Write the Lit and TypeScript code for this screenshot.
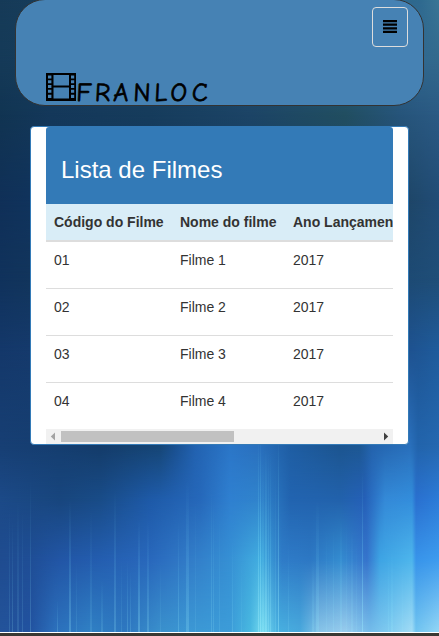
import { LitElement, html, css, svg } from "lit";
import { customElement, property } from "lit/decorators.js";

type Row = { y: number; stops: [number, string][] };

// Colours of the backdrop at given heights; the heights between are blended.
const rows: Row[] = [
  { y: 0, stops: [[0, "#163b58"], [200, "#1c4868"], [420, "#2f6a90"], [439, "#3a7696"]] },
  { y: 60, stops: [[0, "#153a58"], [200, "#1c4564"], [420, "#306890"], [439, "#33698c"]] },
  { y: 115, stops: [[0, "#113452"], [50, "#14385a"], [150, "#163c5c"], [250, "#1c4466"], [345, "#214e60"], [400, "#26547a"], [439, "#2b5a84"]] },
  { y: 200, stops: [[0, "#103058"], [30, "#10335c"], [409, "#1e4668"], [439, "#214c76"]] },
  { y: 280, stops: [[0, "#10325c"], [30, "#12355c"], [409, "#1d4a74"], [439, "#1f4e78"]] },
  { y: 350, stops: [[0, "#14386a"], [30, "#153a6c"], [409, "#1e5290"], [439, "#1f5c9c"]] },
  { y: 446, stops: [[0, "#173f74"], [60, "#153e70"], [100, "#143c6a"], [160, "#164676"], [175, "#1a5090"], [195, "#2262b0"], [230, "#2b76c8"], [258, "#2a70be"], [290, "#1f5ea4"], [340, "#1c5590"], [360, "#1d5894"], [372, "#2464ae"], [410, "#2a70bc"], [418, "#2264ac"], [439, "#2568b0"]] },
  { y: 500, stops: [[0, "#1c4a88"], [60, "#18467e"], [100, "#194c88"], [150, "#1e5aa8"], [200, "#2668ba"], [230, "#2f80d0"], [260, "#3084cc"], [290, "#2264b0"], [340, "#2262ac"], [365, "#2560b8"], [385, "#348ad8"], [412, "#338edc"], [416, "#2a70d0"], [439, "#2c7cd8"]] },
  { y: 560, stops: [[0, "#1f4c90"], [30, "#1f4e96"], [60, "#2256a6"], [100, "#245eb0"], [150, "#2968bc"], [190, "#327cc8"], [230, "#3690d4"], [260, "#42aee0"], [282, "#2f7cc8"], [310, "#2d78c4"], [340, "#348cd0"], [367, "#3674cc"], [380, "#3ea4e4"], [412, "#4eb6ec"], [416, "#3894ea"], [439, "#3e9cee"]] },
  { y: 632, stops: [[0, "#23539a"], [30, "#2252a0"], [55, "#2c70bc"], [90, "#3080c4"], [125, "#2e78c0"], [160, "#3a90cc"], [190, "#3c98d4"], [230, "#3c9cd8"], [250, "#48b8e0"], [263, "#78dcf0"], [278, "#48b0e0"], [300, "#48a8dc"], [320, "#88c4e8"], [345, "#98cced"], [370, "#74bcea"], [390, "#80ccf0"], [412, "#a2dcf5"], [416, "#70c4f0"], [439, "#94d6f5"]] },
];

// x, width, top, opacity at the foot
const streaks: [number, number, number, number][] = [
  [9, 1, 510, 0.14], [12, 1, 520, 0.18], [17, 2, 500, 0.12], [22, 1, 510, 0.15], [30, 1, 480, 0.2],
  [57, 1, 600, 0.2], [69, 2, 500, 0.25], [76, 1, 560, 0.12], [90, 2, 510, 0.12], [101, 2, 580, 0.14],
  [114, 2, 490, 0.2], [121, 1, 560, 0.12], [127, 1, 560, 0.2], [130, 1, 570, 0.18], [138, 2, 520, 0.28],
  [147, 2, 520, 0.2], [160, 1, 560, 0.1], [178, 1, 520, 0.22], [186, 3, 480, 0.22], [195, 1, 500, 0.1],
  [211, 1, 490, 0.18], [213, 1, 500, 0.16], [219, 1, 520, 0.12], [232, 1, 540, 0.18], [241, 1, 560, 0.1],
  [258, 1, 430, 0.4], [260, 1, 430, 0.45], [262, 2, 460, 0.18], [265, 2, 450, 0.32], [268, 1, 450, 0.26],
  [270, 1, 450, 0.26], [275, 1, 470, 0.16], [278, 1, 430, 0.42], [288, 1, 540, 0.13], [312, 2, 560, 0.16],
  [316, 3, 500, 0.2], [326, 1, 530, 0.12], [333, 1, 530, 0.15], [340, 2, 520, 0.16], [346, 1, 520, 0.12],
  [351, 2, 530, 0.15], [356, 1, 540, 0.12], [362, 1, 470, 0.4], [388, 1, 550, 0.14], [391, 2, 550, 0.17],
  [402, 1, 560, 0.12],
];

@customElement("light-backdrop")
class LightBackdrop extends LitElement {
  static styles = css`
    :host { display: block; line-height: 0; }
  `;
  render() {
    return html`<svg width="439" height="632" viewBox="0 0 439 632">
      <defs>
        <linearGradient id="streak" x1="0" y1="0" x2="0" y2="1">
          <stop offset="0" stop-color="#7fe4ff" stop-opacity="0"></stop>
          <stop offset="0.5" stop-color="#7fe4ff" stop-opacity="0.55"></stop>
          <stop offset="1" stop-color="#a0f0ff"></stop>
        </linearGradient>
        ${rows.map((r, i) => svg`
          <linearGradient id="row${i}" gradientUnits="userSpaceOnUse" x1="0" y1="0" x2="439" y2="0">
            ${r.stops.map(([x, c]) => svg`<stop offset="${x / 439}" stop-color="${c}"></stop>`)}
          </linearGradient>
          ${i ? svg`
            <linearGradient id="ramp${i}" gradientUnits="userSpaceOnUse" x1="0" y1="${rows[i - 1].y}" x2="0" y2="${r.y}">
              <stop offset="0" stop-color="#fff" stop-opacity="0"></stop>
              <stop offset="1" stop-color="#fff"></stop>
            </linearGradient>
            <mask id="mask${i}" maskUnits="userSpaceOnUse" x="0" y="0" width="439" height="632">
              <rect width="439" height="632" fill="url(#ramp${i})"></rect>
            </mask>` : ""}`)}
      </defs>
      ${rows.map((_, i) => svg`<rect width="439" height="632" fill="url(#row${i})" mask="${i ? `url(#mask${i})` : "none"}"></rect>`)}
      ${streaks.map(([x, w, y, o]) => svg`<rect x="${x}" y="${y}" width="${w}" height="${632 - y}" fill="url(#streak)" opacity="${o}"></rect>`)}
    </svg>`;
  }
}

@customElement("site-header")
class SiteHeader extends LitElement {
  static styles = css`
    :host {
      display: flex; justify-content: space-between; align-items: flex-start;
      box-sizing: border-box; height: 107px; margin: -1px 15px 0 15px;
      border: 1px solid #333; border-radius: 30px; background: #4682b4;
      padding: 7px 15px 0 30px;
    }
    .brand { align-self: flex-end; display: block; overflow: visible; }
    .word {
      font: 26px "Comic Sans MS", "Comic Neue", Lato, sans-serif;
      fill: #000; stroke: #000; stroke-width: 0.7; stroke-linejoin: round;
    }
    .toggle {
      box-sizing: border-box; width: 36px; height: 40px; padding: 0;
      display: flex; justify-content: center; align-items: flex-start; padding-top: 12px;
      background: transparent; border: 1px solid #ddd; border-radius: 4px;
    }
    .toggle svg { display: block; }
  `;
  render() {
    return html`
      <svg class="brand" width="180" height="35" viewBox="0 0 180 35">
        <path fill="#000" fill-rule="evenodd" d="M0 3h30v28H0z
          M7.5 5v10.5h15.5V5z M7.5 17.5v11h15.5v-11z
          M2 5.4h3.4v3H2z M2 10.2h3.4v3H2z M2 15h3.4v3H2z M2 19.8h3.4v3H2z M2 24.7h3.4v3.4H2z
          M25 5.4h3.2v3H25z M25 10.2h3.2v3H25z M25 15h3.2v3H25z M25 19.8h3.2v3H25z M25 24.7h3.2v3.4H25z"></path>
        <text class="word" transform="translate(0 30.5) skewX(-3)" x="30 48.5 67 87 108 124 145.5" y="0">FRANLOC</text>
      </svg>
      <button class="toggle" aria-label="Menu">
        <svg width="14" height="13" viewBox="0 0 14 13">
          <path fill="#000" d="M0 0h14v2.2H0zM0 3.6h14v2.2H0zM0 7.2h14v2.2H0zM0 10.8h14V13H0z"></path>
        </svg>
      </button>`;
  }
}

@customElement("film-table")
class FilmTable extends LitElement {
  @property({ attribute: false }) films: string[][] = [];
  static styles = css`
    :host { display: block; overflow: hidden; color: #333; font: 14px/20px "Liberation Sans", Arial, sans-serif; }
    .line { display: grid; grid-template-columns: 126px 113px 130px; border-top: 1px solid #ddd; height: 46px; }
    .line:nth-child(2) { border-top: 0; }
    .head { height: 36px; background: #d9edf7; border-top: 0; border-bottom: 2px solid #ddd; font-weight: bold; }
    .cell { padding: 8px; white-space: nowrap; }
  `;
  render() {
    return html`
      <div class="line head">
        ${["Código do Filme", "Nome do filme", "Ano Lançamento"].map((t) => html`<div class="cell">${t}</div>`)}
      </div>
      ${this.films.map((f) => html`<div class="line">${f.map((t) => html`<div class="cell">${t}</div>`)}</div>`)}`;
  }
}

@customElement("scroll-track")
class ScrollTrack extends LitElement {
  static styles = css`
    :host { display: flex; align-items: center; height: 15px; background: #f1f1f1; }
    .arrow { width: 15px; height: 15px; display: block; }
    .rail { flex: 1; }
    .thumb { width: 173px; height: 11px; background: #c1c1c1; }
  `;
  render() {
    return html`
      <svg class="arrow" viewBox="0 0 15 15"><path fill="#a3a3a3" d="M9 3.5v8L4.8 7.5z"></path></svg>
      <div class="rail"><div class="thumb"></div></div>
      <svg class="arrow" viewBox="0 0 15 15"><path fill="#404040" d="M6 3.5v8l4.2-4z"></path></svg>`;
  }
}

@customElement("app-root")
class AppRoot extends LitElement {
  static styles = css`
    :host { display: block; position: relative; height: 636px; overflow: hidden; font-family: "Liberation Sans", Arial, sans-serif; background: #3a3833; }
    .backdrop { position: absolute; top: 0; left: 0; }
    .page { position: relative; height: 632px; display: flow-root; }
    .card {
      box-sizing: border-box; margin: 20px 30px 0; width: 379px; padding: 0 15px;
      background: #fff; border: 1px solid #337ab7; border-radius: 4px;
    }
    .title {
      margin: 0; height: 77px; box-sizing: border-box; padding: 30px 15px 0;
      background: #337ab7; color: #fff; font-size: 24px; line-height: 26px; font-weight: normal;
      border-radius: 3px 3px 0 0;
    }
    .foot { position: relative; height: 3px; border-top: 1px solid #fff; background: #3a3833; }
  `;
  private films = [1, 2, 3, 4].map((n) => [`0${n}`, `Filme ${n}`, "2017"]);
  render() {
    return html`
      <light-backdrop class="backdrop"></light-backdrop>
      <div class="page">
        <site-header></site-header>
        <main class="card">
          <h3 class="title">Lista de Filmes</h3>
          <film-table .films=${this.films}></film-table>
          <scroll-track></scroll-track>
        </main>
      </div>
      <div class="foot"></div>`;
  }
}
